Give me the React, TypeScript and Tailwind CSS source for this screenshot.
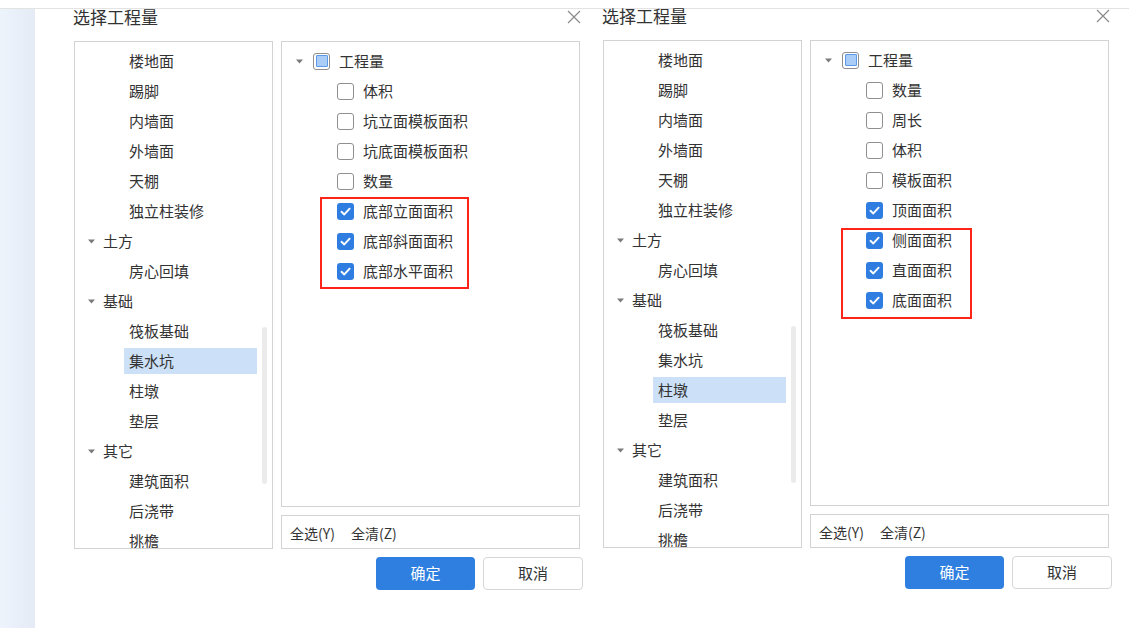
import React from "react";

type TreeItem = { label: string; level: 0 | 1 };
type QtyItem = { label: string; checked: boolean };

const treeItems: TreeItem[] = [
  { label: "楼地面", level: 1 },
  { label: "踢脚", level: 1 },
  { label: "内墙面", level: 1 },
  { label: "外墙面", level: 1 },
  { label: "天棚", level: 1 },
  { label: "独立柱装修", level: 1 },
  { label: "土方", level: 0 },
  { label: "房心回填", level: 1 },
  { label: "基础", level: 0 },
  { label: "筏板基础", level: 1 },
  { label: "集水坑", level: 1 },
  { label: "柱墩", level: 1 },
  { label: "垫层", level: 1 },
  { label: "其它", level: 0 },
  { label: "建筑面积", level: 1 },
  { label: "后浇带", level: 1 },
  { label: "挑檐", level: 1 },
];

const firstQty: QtyItem[] = [
  { label: "体积", checked: false },
  { label: "坑立面模板面积", checked: false },
  { label: "坑底面模板面积", checked: false },
  { label: "数量", checked: false },
  { label: "底部立面面积", checked: true },
  { label: "底部斜面面积", checked: true },
  { label: "底部水平面积", checked: true },
];

const secondQty: QtyItem[] = [
  { label: "数量", checked: false },
  { label: "周长", checked: false },
  { label: "体积", checked: false },
  { label: "模板面积", checked: false },
  { label: "顶面面积", checked: true },
  { label: "侧面面积", checked: true },
  { label: "直面面积", checked: true },
  { label: "底面面积", checked: true },
];

const Arrow = () => (
  <svg width="7" height="5" viewBox="0 0 7 5" className="shrink-0">
    <path d="M0 0.5 L7 0.5 L3.5 4.5 Z" fill="#7a7a7a" />
  </svg>
);

const CheckBox = ({ checked }: { checked: boolean }) =>
  checked ? (
    <div className="flex h-[17px] w-[17px] shrink-0 items-center justify-center rounded-[3px] bg-[#2f7de1]">
      <svg width="13" height="13" viewBox="0 0 12 12">
        <path
          d="M2.3 6.3 L4.9 8.7 L9.8 3.4"
          fill="none"
          stroke="#fff"
          strokeWidth="1.8"
          strokeLinecap="round"
          strokeLinejoin="round"
        />
      </svg>
    </div>
  ) : (
    <div className="h-[17px] w-[17px] shrink-0 rounded-[3px] border border-[#8f8f8f] bg-white" />
  );

const PartialBox = () => (
  <div className="flex h-[17px] w-[17px] shrink-0 items-center justify-center rounded-[3px] border border-[#8f8f8f] bg-white">
    <div className="h-[12px] w-[12px] rounded-[1px] border border-[#5a9ae8] bg-[#a9cdf6]" />
  </div>
);

const CloseIcon = () => (
  <svg width="14" height="14" viewBox="0 0 14 14" className="mt-px">
    <path d="M1 1 L13 13 M13 1 L1 13" stroke="#8a8a8a" strokeWidth="1.2" />
  </svg>
);

const Dialog = ({
  selected,
  items,
  redBox,
  className = "",
}: {
  selected: string;
  items: QtyItem[];
  redBox: string;
  className?: string;
}) => (
  <div className={`flex w-[509px] flex-col ${className}`}>
    {/* header */}
    <div className="flex h-[32px] items-start justify-between pr-[2px]">
      <span className="-ml-px text-[17px] leading-[16px] text-[#333]">选择工程量</span>
      <CloseIcon />
    </div>

    <div className="flex h-[508px] gap-[8px]">
      {/* category tree */}
      <div className="relative h-full w-[199px] overflow-hidden border border-[#d3d3d3] bg-white pt-[4px]">
        {treeItems.map((item) =>
          item.level === 0 ? (
            <div key={item.label} className="flex h-[30px] items-center gap-[8px] pl-[13px]">
              <Arrow />
              <span>{item.label}</span>
            </div>
          ) : (
            <div key={item.label} className="flex h-[30px] items-center pl-[49px] pr-[15px]">
              <div
                className={`flex h-[26px] flex-1 items-center px-[5px] ${
                  item.label === selected ? "bg-[#cce1f8]" : ""
                }`}
              >
                {item.label}
              </div>
            </div>
          )
        )}
        <div className="absolute right-[5px] top-[285px] h-[157px] w-[5px] rounded-full bg-[#ebebeb]" />
      </div>

      {/* quantity list */}
      <div className="flex w-[299px] flex-col gap-[8px]">
        <div className="relative h-[466px] border border-[#d3d3d3] bg-white pt-[4px]">
          <div className="flex h-[30px] items-center pl-[14px]">
            <Arrow />
            <div className="ml-[10px]">
              <PartialBox />
            </div>
            <span className="ml-[9px]">工程量</span>
          </div>
          {items.map((q) => (
            <div key={q.label} className="flex h-[30px] items-center gap-[9px] pl-[55px]">
              <CheckBox checked={q.checked} />
              <span>{q.label}</span>
            </div>
          ))}
          <div className={`absolute border-2 border-[#ff2418] ${redBox}`} />
        </div>
        <div className="flex h-[34px] items-center gap-[16px] border border-[#d3d3d3] bg-white pl-[8px] pt-[2px] text-[14px]">
          <span>全选(Y)</span>
          <span>全清(Z)</span>
        </div>
      </div>
    </div>

    {/* footer buttons */}
    <div className="mt-[8px] flex justify-end gap-[8px]">
      <button className="flex h-[33px] w-[99px] items-center justify-center rounded-[4px] bg-[#2f7fe0] text-[15px] text-white">
        确定
      </button>
      <button className="flex h-[33px] w-[100px] items-center justify-center rounded-[4px] border border-[#d6d6d6] bg-white text-[15px] text-[#333]">
        取消
      </button>
    </div>
  </div>
);

export default function App() {
  return (
    <div
      className="h-[628px] w-[1129px] overflow-hidden bg-white text-[15px] text-[#333]"
      style={{ fontFamily: '"Noto Sans CJK SC", "Noto Sans", sans-serif' }}
    >
      <div className="h-[8px]" />
      <div className="flex h-[620px] border-t border-[#e3e3e3]">
        <div className="w-[35px] shrink-0 bg-gradient-to-r from-[#eef4fc] to-[#e4ebf5]" />
        <div className="flex gap-[20px] pl-[39px]">
          <Dialog selected="集水坑" items={firstQty} redBox="left-[38px] top-[155px] h-[92px] w-[149px]" />
          <Dialog
            selected="柱墩"
            items={secondQty}
            redBox="left-[30px] top-[187px] h-[91px] w-[131px]"
            className="-mt-px"
          />
        </div>
      </div>
    </div>
  );
}
